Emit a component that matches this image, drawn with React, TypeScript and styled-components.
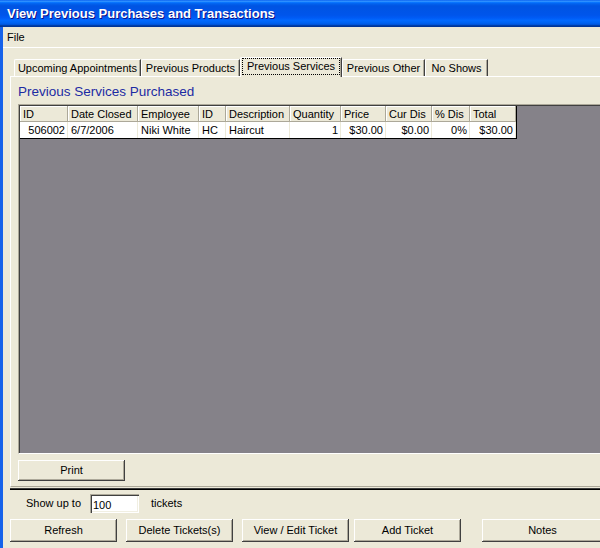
import styled, { createGlobalStyle, css } from "styled-components";

const GlobalStyle = createGlobalStyle`
  html, body {
    margin: 0;
    padding: 0;
    overflow: hidden;
    background: #ece9d8;
  }
  body {
    font-family: "Liberation Sans", Arial, sans-serif;
    font-size: 11px;
    color: #000;
  }
`;

type Align = "left" | "right";

const columns: { title: string; align: Align; value: string }[] = [
  { title: "ID", align: "right", value: "506002" },
  { title: "Date Closed", align: "left", value: "6/7/2006" },
  { title: "Employee", align: "left", value: "Niki White" },
  { title: "ID", align: "left", value: "HC" },
  { title: "Description", align: "left", value: "Haircut" },
  { title: "Quantity", align: "right", value: "1" },
  { title: "Price", align: "right", value: "$30.00" },
  { title: "Cur Dis", align: "right", value: "$0.00" },
  { title: "% Dis", align: "right", value: "0%" },
  { title: "Total", align: "right", value: "$30.00" },
];

const tabs = [
  { label: "Upcoming Appointments", width: 127 },
  { label: "Previous Products", width: 99 },
  { label: "Previous Services", width: 102, active: true },
  { label: "Previous Other", width: 83 },
  { label: "No Shows", width: 63 },
];

const actions = [
  { label: "Refresh", offset: 0, width: 107 },
  { label: "Delete Tickets(s)", offset: 9, width: 107 },
  { label: "View / Edit Ticket", offset: 9, width: 107 },
  { label: "Add Ticket", offset: 5, width: 107 },
  { label: "Notes", offset: 21, width: 121 },
];

export default function App() {
  return (
    <>
      <GlobalStyle />
      <Window>
        <TitleBar>View Previous Purchases and Transactions</TitleBar>
        <Body>
          <MenuBar>
            <MenuItem>File</MenuItem>
          </MenuBar>
          <Client>
            <TabStrip>
              {tabs.map((t) => (
                <Tab key={t.label} $width={t.width} $active={!!t.active}>
                  {t.label}
                </Tab>
              ))}
            </TabStrip>
            <Panel>
              <Heading>Previous Services Purchased</Heading>
              <Grid>
                <Table>
                  {columns.map((c, i) => (
                    <HeadCell key={"h" + i}>{c.title}</HeadCell>
                  ))}
                  {columns.map((c, i) => (
                    <Cell key={"c" + i} $align={c.align}>
                      {c.value}
                    </Cell>
                  ))}
                </Table>
              </Grid>
              <Button $width={107} $height={21}>
                Print
              </Button>
            </Panel>
            <Separator />
            <ShowRow>
              <ShowLabel>Show up to</ShowLabel>
              <CountInput defaultValue="100" />
              <ShowLabel>tickets</ShowLabel>
            </ShowRow>
            <ButtonRow>
              {actions.map((a) => (
                <Button
                  key={a.label}
                  $width={a.width}
                  $height={23}
                  $offset={a.offset}
                >
                  {a.label}
                </Button>
              ))}
            </ButtonRow>
          </Client>
        </Body>
      </Window>
    </>
  );
}

const Window = styled.div`
  width: 600px;
  height: 548px;
  display: flex;
  flex-direction: column;
  overflow: hidden;
`;

const TitleBar = styled.div`
  height: 27px;
  box-sizing: border-box;
  padding: 6px 0 0 7px;
  color: #fff;
  font-family: "Liberation Sans", Arial, sans-serif;
  font-weight: bold;
  font-size: 13px;
  text-shadow: 1px 1px #0f1089;
  background: linear-gradient(
    180deg,
    #0058ee 0%,
    #3593ff 4%,
    #288eff 6%,
    #127dff 8%,
    #036ffc 10%,
    #0262ee 14%,
    #0057e5 20%,
    #0054e3 24%,
    #0055eb 56%,
    #005bf5 66%,
    #026afe 76%,
    #0062ef 86%,
    #0052d6 92%,
    #0040ab 94%,
    #003092 100%
  );
`;

const Body = styled.div`
  flex: 1;
  display: flex;
  flex-direction: column;
  border-left: 3px solid #1662ea;
  overflow: hidden;
`;

const MenuBar = styled.div`
  height: 20px;
  display: flex;
  align-items: center;
  padding-left: 4px;
  border-bottom: 1px solid #fff;
`;

const MenuItem = styled.span`
  padding: 0 0 1px;
`;

const Client = styled.div`
  padding-left: 7px;
  display: flex;
  flex-direction: column;
`;

const TabStrip = styled.div`
  display: flex;
  align-items: flex-end;
  height: 28px;
  padding-left: 4px;
  border-bottom: 1px solid #fff;
`;

const Tab = styled.div<{ $width: number; $active: boolean }>`
  position: relative;
  width: ${(p) => p.$width}px;
  height: 17px;
  box-sizing: border-box;
  display: flex;
  align-items: center;
  justify-content: center;
  padding-bottom: 1px;
  background: #ece9d8;
  border-top: 1px solid #fff;
  border-left: 1px solid #fff;
  border-top-left-radius: 2px;
  box-shadow: inset -1px 0 #aca899;
  border-right: 1px solid #404040;
  white-space: nowrap;

  ${(p) =>
    p.$active &&
    css`
      height: 20px;
      margin-bottom: -1px;
      padding-bottom: 3px;
      &::after {
        content: "";
        position: absolute;
        left: 1px;
        top: 0;
        right: 1px;
        bottom: 2px;
        border: 1px dotted #000;
      }
    `}
`;

const Panel = styled.div`
  display: flex;
  flex-direction: column;
  align-items: flex-start;
  padding: 0 0 5px 7px;
  border-left: 1px solid #fff;
  border-bottom: 1px solid #aca899;
`;

const Heading = styled.div`
  font-size: 13.5px;
  line-height: 16px;
  color: #1c2ba3;
  padding-top: 7px;
  margin-bottom: 4px;
`;

const Grid = styled.div`
  align-self: stretch;
  height: 350px;
  box-sizing: border-box;
  background: #858289;
  border-top: 1px solid #aca899;
  border-left: 1px solid #aca899;
  border-bottom: 1px solid #fff;
  box-shadow: inset 1px 1px #404040;
  padding: 1px 0 0 1px;
  margin-bottom: 6px;
`;

const Table = styled.div`
  display: inline-grid;
  grid-template-columns: 48px 70px 61px 27px 64px 51px 45px 46px 38px 46px;
  grid-auto-rows: 16px;
  border-right: 1px solid #000;
  border-bottom: 1px solid #000;
  background: #fff;
`;

const HeadCell = styled.div`
  box-sizing: border-box;
  padding: 1px 0 0 3px;
  line-height: 14px;
  background: #ece9d8;
  border-right: 1px solid #aca899;
  border-bottom: 1px solid #aca899;
  box-shadow: inset 1px 1px #fff;
  white-space: nowrap;
  overflow: hidden;
`;

const Cell = styled.div<{ $align: Align }>`
  box-sizing: border-box;
  padding: 1px 2px 0 3px;
  line-height: 15px;
  text-align: ${(p) => p.$align};
  border-right: 1px solid #ece9d8;
  white-space: nowrap;
  overflow: hidden;
`;

const Button = styled.button<{ $width: number; $height: number; $offset?: number }>`
  flex: none;
  width: ${(p) => p.$width}px;
  height: ${(p) => p.$height}px;
  margin: 0 0 0 ${(p) => p.$offset ?? 0}px;
  padding: 0 0 1px;
  font-family: "Liberation Sans", Arial, sans-serif;
  font-size: 11px;
  color: #000;
  background: #ece9d8;
  border: none;
  box-shadow: inset -1px -1px #404040, inset 1px 1px #fff,
    inset -2px -2px #aca899;
`;

const Separator = styled.div`
  margin-top: 1px;
  height: 0;
  border-top: 1px solid #3c3c3c;
  border-bottom: 1px solid #000;
`;

const ShowRow = styled.div`
  display: flex;
  align-items: center;
  height: 19px;
  margin-top: 4px;
  padding-left: 16px;
`;

const ShowLabel = styled.span`
  width: 64px;
  padding-bottom: 2px;
  &:last-child {
    margin-left: 12px;
  }
`;

const CountInput = styled.input`
  width: 49px;
  height: 19px;
  box-sizing: border-box;
  padding: 2px 0 0 3px;
  font-family: "Liberation Sans", Arial, sans-serif;
  font-size: 11px;
  border: none;
  outline: none;
  background: #fff;
  box-shadow: inset 1px 1px #aca899, inset 2px 2px #404040,
    inset -1px -1px #fff, inset -2px -2px #f1efe2;
`;

const ButtonRow = styled.div`
  display: flex;
  margin-top: 6px;
  overflow: hidden;
`;
